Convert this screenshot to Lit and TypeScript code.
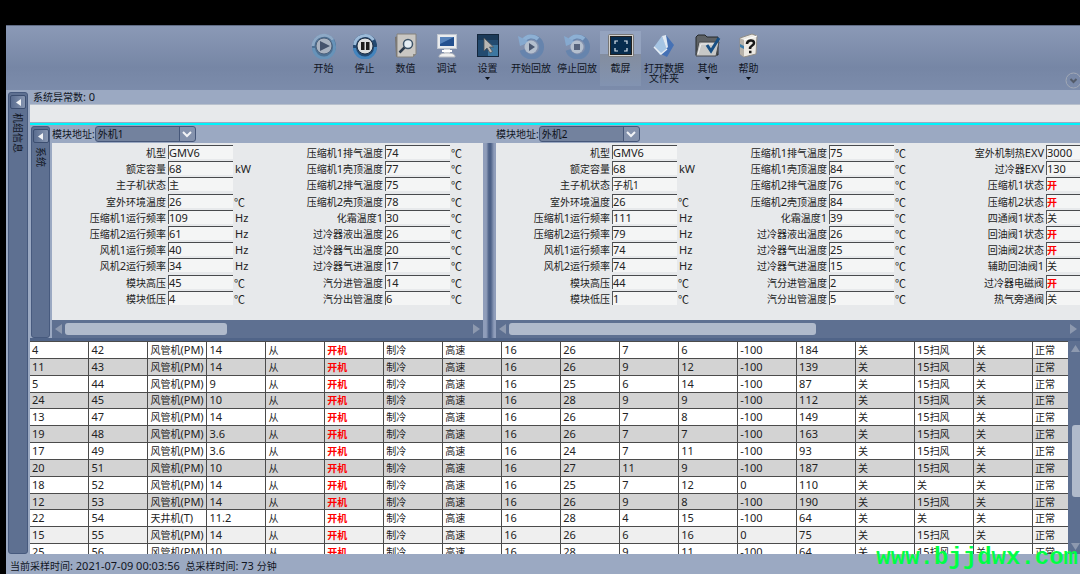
import { LitElement, html, css, svg, nothing, type TemplateResult } from "lit";
import { customElement, property } from "lit/decorators.js";
import { classMap } from "lit/directives/class-map.js";

const base = css`
  * { box-sizing: border-box; }
  button { font: inherit; color: inherit; border: 0; padding: 0; background: none; }
  .latin { font-size: 11px; }
`;

/* Latin runs are set one pixel larger than the Chinese around them. */
const mixed = (text: string) =>
  text.split(/([\x20-\x7e]+)/).filter((t) => t).map((t) =>
    /^[\x20-\x7e]+$/.test(t) ? html`<span class="latin">${t}</span>` : t);

const icons: Record<string, TemplateResult> = {
  play: svg`<circle cx="14" cy="13" r="12" fill="#4d7194"/><path d="M3 13a11 11 0 0 1 20-6" fill="none" stroke="#8ea9c6" stroke-width="3"/><path d="M3.500 15a10.500 10.500 0 0 0 21-1c0-3-1-5-2-7" fill="none" stroke="#6793b9" stroke-width="3"/><circle cx="14" cy="13" r="8" fill="#a9b3c1" stroke="#4c617c"/><path d="M10 8l10 5-10 5z" fill="#45536c"/>`,
  pause: svg`<circle cx="14" cy="13" r="12" fill="#234870"/><path d="M3.500 12a10.500 10.500 0 0 1 19-5" fill="none" stroke="#9dbbd9" stroke-width="3"/><path d="M3.500 15a10.500 10.500 0 0 0 21-1" fill="none" stroke="#4384bd" stroke-width="3"/><circle cx="14" cy="13" r="8" fill="#dcdedf" stroke="#1d2d43"/><path d="M10 9h3.500v8H10zM15 9h3.500v8H15z" fill="#1c1c1c"/>`,
  value: svg`<path d="M3 4l3-1v20l-2 1z" fill="#77736e"/><path d="M5 1h19v20l-3 3H5z" fill="#c9c7c3" stroke="#85827d"/><path d="M24 21h-3v3z" fill="#8b8984"/><circle cx="16" cy="11" r="4.500" fill="#e6eef3" stroke="#3e5468" stroke-width="1.500"/><path d="M12.500 14.500l-5 5" stroke="#2d3b4b" stroke-width="2.500"/>`,
  debug: svg`<rect x="4.500" y="1.500" width="19" height="14" fill="#e9ebee" stroke="#c0c6d0"/><rect x="7" y="4" width="14" height="9" fill="#24508f"/><path d="M7 4h14l-14 7z" fill="#5783bb"/><path d="M11 16h6v4h-6z" fill="#d9dce0"/><path d="M6 24c0-3 3-4 8-4s8 1 8 4z" fill="#f0f0ef" stroke="#b7bac0"/><path d="M9 18h10" stroke="#fff" stroke-width="2"/>`,
  cursor: svg`<rect x="3.500" y="1.500" width="21" height="22" fill="#234b70" stroke="#14263c"/><path d="M14 12h10v11H14z" fill="#3d77a0"/><path d="M4 2h20v5H4z" fill="#1c3a59"/><path d="M10 5v13l3-3 3 5 2.500-1.500-3-4.500h4z" fill="#b8b7b4" stroke="#4f5358" stroke-width=".8"/>`,
  replay: svg`<path d="M5 11a10 10 0 1 1 0 6" fill="none" stroke="#6684ad" stroke-width="5"/><path d="M6 8a10 10 0 0 1 15-2" fill="none" stroke="#8db0d4" stroke-width="4"/><path d="M1 3l2 10 10-4z" fill="#86a9cf"/><circle cx="14" cy="14" r="6.500" fill="#b4bfce"/><path d="M12 10l6 4-6 4z" fill="#4a5770"/>`,
  stopReplay: svg`<path d="M5 11a10 10 0 1 1 0 6" fill="none" stroke="#6684ad" stroke-width="5"/><path d="M6 8a10 10 0 0 1 15-2" fill="none" stroke="#8db0d4" stroke-width="4"/><path d="M1 3l2 10 10-4z" fill="#86a9cf"/><circle cx="14" cy="14" r="6.500" fill="#b4bfce"/><rect x="11" y="11" width="6" height="6" fill="#56637c"/>`,
  screen: svg`<rect x="1.500" y="1.500" width="25" height="22" rx="1" fill="#d3d2cf" stroke="#777"/><rect x="3.500" y="3.500" width="21" height="18" fill="#072c4e" stroke="#222"/><path d="M8 11V8h3M17 8h3v3M20 15v3h-3M11 18H8v-3" fill="none" stroke="#dbe4ed" stroke-width="1.200"/>`,
  folder: svg`<path d="M4 14L12 3l5 13-7 6z" fill="#a5c4e3"/><path d="M12 3l4-1 5 13-4 2z" fill="#dfe8f2"/><path d="M16 2l8 10-7 12-6-3 7-7z" fill="#4571b5"/><path d="M4 14l7 7 6-5" fill="none" stroke="#e8eef5" stroke-width="1.500"/>`,
  other: svg`<path d="M2 4l2-2h7l2 2h11v18H2z" fill="#5e6265" stroke="#25282b"/><path d="M5 9h20l-3 14H2z" fill="#c7c8c7" stroke="#484b4e"/><path d="M4 21l3-10h16" fill="none" stroke="#eee"/><path d="M13 12l4 6L25 5" fill="none" stroke="#174f84" stroke-width="3"/>`,
  help: svg`<path d="M5 5l12-4 5 2-1 18-12 3-4-3z" fill="#ece9e3" stroke="#918d86"/><path d="M5 5l4 2v17l-4-3z" fill="#b7b2aa"/><path d="M9 7l13-4" stroke="#fff"/><path d="M5 11l4 2v3l-4-2z" fill="#3c7ba8"/><path d="M12 11c0-4 7-5 7-1 0 3-4 2-4 6M14 19h2.500" fill="none" stroke="#171717" stroke-width="2.500"/>`,
};

interface Tool { icon: string; label: string; size?: string; menu?: boolean; active?: boolean }
const tools: Tool[] = [
  { icon: "play", label: "开始" }, { icon: "pause", label: "停止" },
  { icon: "value", label: "数值" }, { icon: "debug", label: "调试" },
  { icon: "cursor", label: "设置", menu: true },
  { icon: "replay", label: "开始回放", size: "wide" },
  { icon: "stopReplay", label: "停止回放", size: "wide" },
  { icon: "screen", label: "截屏", active: true },
  { icon: "folder", label: "打开数据文件夹", size: "wide" },
  { icon: "other", label: "其他", menu: true }, { icon: "help", label: "帮助", menu: true },
];

@customElement("tool-bar")
export class ToolBar extends LitElement {
  static styles = [base, css`
    :host { display: flex; justify-content: center; padding: 5px 14px 4px 0; height: 65px; position: relative;
      background: linear-gradient(#8b99b6, #7686a5 65%, #7c8cab); border-top: 1px solid #5f6b84; }
    .tool { width: 41px; display: flex; flex-direction: column; align-items: center; padding-top: 2px; line-height: 10px; }
    .tool.wide { width: 46px; padding-left: 2px; padding-right: 2px; }
    .tool.active { background: linear-gradient(#94a3bf 42%, #838d9f 42%, #8293b1); }
    .icon { width: 28px; height: 26px; margin-bottom: 4px; flex: none; }
    .caret { width: 5px; height: 3px; margin-top: 4px; background: #0b0f16; clip-path: polygon(0 0, 100% 0, 50% 100%); }
    .fold { position: absolute; right: -2px; bottom: 1px; width: 17px; height: 17px; }
  `];
  render() {
    return html`${tools.map((t) => html`
      <button class=${classMap({ tool: true, wide: t.size === "wide", active: !!t.active })}>
        <svg class="icon" viewBox="0 0 28 26">${icons[t.icon]}</svg>
        <span>${t.label}</span>${t.menu ? html`<span class="caret"></span>` : nothing}
      </button>`)}
      <button class="fold" aria-label="收起">
        <svg width="17" height="17" viewBox="0 0 17 17" fill="none"><circle cx="8.500" cy="8.500" r="7.500" stroke="#a2a9b6"/><path d="M5.500 7l3 3 3-3" stroke="#535b69" stroke-width="2"/></svg>
      </button>`;
  }
}

@customElement("side-tab")
export class SideTab extends LitElement {
  @property() label = "";
  static styles = [base, css`
    :host { display: flex; flex-direction: column; align-items: center; gap: 4px; padding-top: 2px;
      background: #5e7091; border: 1px solid #475a7e; border-radius: 3px; }
    .collapse { width: 16px; height: 14px; border: 1px solid #3c4e70; border-radius: 2px;
      background: linear-gradient(90deg, #5a6d90, #8796b1); display: grid; place-items: center; }
    .text { writing-mode: vertical-rl; text-orientation: sideways; line-height: 14px; color: #10151f; }
  `];
  render() {
    return html`<button class="collapse" aria-label="折叠${this.label}">
        <svg width="5" height="7" viewBox="0 0 5 7"><path d="M5 0v7L0 3.500z" fill="#f2f4f7"/></svg>
      </button><span class="text">${this.label}</span>`;
  }
}

type Field = [label: string, value: string, unit: string];
const names = [
  ["机型", "额定容量", "主子机状态", "室外环境温度", "压缩机1运行频率", "压缩机2运行频率", "风机1运行频率", "风机2运行频率", "模块高压", "模块低压"],
  ["压缩机1排气温度", "压缩机1壳顶温度", "压缩机2排气温度", "压缩机2壳顶温度", "化霜温度1", "过冷器液出温度", "过冷器气出温度", "过冷器气进温度", "汽分进管温度", "汽分出管温度"],
  ["室外机制热EXV", "过冷器EXV", "压缩机1状态", "压缩机2状态", "四通阀1状态", "回油阀1状态", "回油阀2状态", "辅助回油阀1", "过冷器电磁阀", "热气旁通阀"],
];
const units = [["", "kW", "", "℃", "Hz", "Hz", "Hz", "Hz", "℃", "℃"], Array(10).fill("℃"), Array(10).fill("")];
const group = (values: string[]): Field[][] =>
  values.map((line, c) => line.split(" ").map((v, r): Field => [names[c][r], v, units[c][r]]));

const units1 = group(["GMV6 68 主 26 109 61 40 34 45 4", "74 77 75 78 30 26 20 17 14 6"]);
const units2 = group(["GMV6 68 子机1 26 111 79 74 74 44 1", "75 84 76 84 39 26 25 15 2 5", "3000 130 开 开 关 开 开 关 开 关"]);

@customElement("unit-panel")
export class UnitPanel extends LitElement {
  @property() name = "";
  @property({ type: Number }) thumb = 50;
  @property({ attribute: false }) groups: Field[][] = [];
  static styles = [base, css`
    :host { display: flex; flex-direction: column; min-width: 0; overflow: hidden; }
    .address { height: 18px; flex: none; display: flex; align-items: center; background: #9ba9c2; }
    .picker { position: relative; display: flex; }
    .select { appearance: none; width: 101px; height: 16px; padding: 0 20px 0 2px; border: 1px solid #465779; border-radius: 3px;
      background: linear-gradient(90deg, #73829e 83px, #465779 83px, #465779 84px, #8492ad 84px); font: inherit; color: #0d1119; }
    .chevron { position: absolute; right: 4px; top: 5px; pointer-events: none; }
    .fields { flex: 1; display: flex; background: #e7e9eb; padding: 2px 0 13px; }
    .group { flex: none; width: 217px; display: grid; grid-template-columns: 115px 65px 1fr; column-gap: 1px; grid-template-rows: repeat(10, 1fr); line-height: 16px; color: #222; }
    .row { display: contents; }
    .name { text-align: right; white-space: nowrap; padding-right: 1px; }
    .value { width: 65px; height: 14px; padding: 0; border: 0; border-top: 1px solid #484a4d; border-left: 1px solid #55585c; border-radius: 0;
      background: #f4f5f5; color: #222; font: inherit; font-size: 11px; line-height: 13px; outline: 0; }
    .value.cjk { font-size: 10px; }
    .value.on { color: #f00; font-weight: 700; }
    .unit { padding-left: 1px; font-size: 11px; }
    .unit.degree { padding-left: 0; font-family: "Noto Sans CJK SC", sans-serif; }
    .scroll { height: 18px; flex: none; background: #5e7091; display: flex; align-items: center; padding: 0 3px; gap: 3px; }
    .track { flex: 1; height: 12px; }
    .thumb { height: 12px; border-radius: 3px; background: #b0bacb; }
    .arrow { display: flex; }
  `];
  render() {
    return html`
      <div class="address"><label for="unit">模块地址:</label>
        <div class="picker"><select class="select" id="unit"><option>${this.name}</option></select>
          <svg class="chevron" width="10" height="7" viewBox="0 0 10 7"><path d="M1 1l4 4 4-4" fill="none" stroke="#f1f3f6" stroke-width="2"/></svg></div>
      </div>
      <div class="fields">${this.groups.map((g, c) => html`<div class="group">${g.map(([label, value, unit], r) => html`
        <div class="row">
          <label class="name" for="f${c}-${r}">${mixed(label)}</label>
          <input id="f${c}-${r}" class=${classMap({ value: true, cjk: /[^\x00-\x7f]/.test(value), on: value === "开" })} .value=${value} readonly>
          <span class=${classMap({ unit: true, degree: unit === "℃" })}>${unit}</span>
        </div>`)}</div>`)}</div>
      <div class="scroll">
        <button class="arrow" aria-label="向左"><svg width="7" height="10"><path d="M7 0v10L0 5z" fill="#8d99af"/></svg></button>
        <div class="track"><div class="thumb" style="width:${this.thumb}%"></div></div>
        <button class="arrow" aria-label="向右"><svg width="7" height="10"><path d="M0 0v10l7-5z" fill="#8d99af"/></svg></button>
      </div>`;
  }
}

/* no., address, model, capacity, then the columns that differ from row to row */
const indoor = [
  "4 42 风管机(PM) 14 26 7 6 -100 184 15扫风", "11 43 风管机(PM) 14 26 9 12 -100 139 15扫风",
  "5 44 风管机(PM) 9 25 6 14 -100 87 15扫风", "24 45 风管机(PM) 10 28 9 9 -100 112 15扫风",
  "13 47 风管机(PM) 14 26 7 8 -100 149 15扫风", "19 48 风管机(PM) 3.6 26 7 7 -100 163 15扫风",
  "17 49 风管机(PM) 3.6 24 7 11 -100 93 15扫风", "20 51 风管机(PM) 10 27 11 9 -100 187 15扫风",
  "18 52 风管机(PM) 14 25 7 12 0 110 关", "12 53 风管机(PM) 14 26 9 8 -100 190 15扫风",
  "22 54 天井机(T) 11.2 28 4 15 -100 64 关", "15 55 风管机(PM) 14 26 6 16 0 75 15扫风",
  "25 56 风管机(PM) 10 28 9 11 -100 64 15扫风",
].map((line) => {
  const [no, addr, model, cap, t1, t2, t3, t4, t5, swing] = line.split(" ");
  return [no, addr, model, cap, "从", "开机", "制冷", "高速", "16", t1, t2, t3, t4, t5, "关", swing, "关", "正常"];
});

@customElement("indoor-table")
export class IndoorTable extends LitElement {
  static styles = [base, css`
    :host { display: flex; min-height: 0; flex: 1; overflow: hidden; background: #5e7091; }
    .view { flex: 1; min-width: 0; overflow: hidden; }
    .table { width: 1062px; height: 220px; table-layout: fixed; border-collapse: collapse; background: #fff; color: #222; }
    .cell { border: 1px solid #4b4b4b; padding: 0 0 0 2px; line-height: 14px; white-space: nowrap; }
    .cell:first-child { border-left: 0; }
    .row:nth-child(even) { background: #d3d3d3; }
    .row:nth-child(12) { background: #efefef; }
    .on { color: #f00; font-weight: 700; }
    .scroll { width: 12px; flex: none; display: flex; flex-direction: column; align-items: flex-end; padding: 4px 0; gap: 3px; }
    .arrow { display: flex; }
    .track { flex: 1; width: 8px; display: flex; flex-direction: column; }
    .lead { height: 38%; }
    .thumb { height: 39%; border-radius: 3px 0 0 3px; background: #b0bacb; }
  `];
  render() {
    return html`<div class="view"><table class="table"><tbody>${indoor.map((row) => html`<tr class="row">${row.map((c) =>
        html`<td class=${classMap({ cell: true, on: c === "开机" })}>${mixed(c)}</td>`)}</tr>`)}</tbody></table></div>
      <div class="scroll">
        <button class="arrow" aria-label="向上"><svg width="9" height="7"><path d="M0 7h9L4.500 0z" fill="#8d99af"/></svg></button>
        <div class="track"><div class="lead"></div><div class="thumb"></div></div>
        <button class="arrow" aria-label="向下"><svg width="9" height="7"><path d="M0 0h9L4.500 7z" fill="#8d99af"/></svg></button>
      </div>`;
  }
}

@customElement("app-root")
export class AppRoot extends LitElement {
  static styles = [base, css`
    :host { display: flex; flex-direction: column; box-sizing: border-box; height: 100vh; overflow: hidden; position: relative; padding: 25px 0 0 6px; background: #000;
      font: 10px/14px "Noto Sans", "Noto Sans CJK SC", sans-serif; color: #10151f; }
    .tools { flex: none; }
    .main { flex: 1; min-height: 0; display: flex; gap: 2px; padding-left: 2px; background: #9ba9c2; }
    .side { width: 20px; flex: none; margin-top: 2px; }
    .content { flex: 1; min-width: 0; display: flex; flex-direction: column; }
    .count { padding-left: 3px; height: 14px; flex: none; }
    .alert { height: 18px; flex: none; background: #e7e9eb; border-top: 1px solid #b9c1cd; }
    .system { display: grid; grid-template-columns: 20px minmax(0, 433fr) 13px minmax(0, 584fr); flex: none; margin-top: 1px; height: 218px;
      border-top: 2px solid #00f4fb; border-bottom: 3px solid #506488; }
    .inner { margin: 1px 0 0 1px; }
    .panel.first { margin-left: 2px; }
    .splitter { margin-top: 18px; background: linear-gradient(90deg, #8f9dba, #8f9dba 25%, #4d6187 45%, #4d6187 60%, #8f9dba 85%); }
    .status { height: 20px; flex: none; padding: 5px 0 0 4px; line-height: 14px; background: #9ba9c2; white-space: pre; }
    .site { position: absolute; right: 2px; bottom: 4px; font: bold 24px/24px "Liberation Mono", monospace; color: #00ff45; text-decoration: none; }
  `];
  render() {
    return html`
      <tool-bar class="tools"></tool-bar>
      <div class="main">
        <side-tab class="side" label="机组信息"></side-tab>
        <div class="content">
          <div class="count">${mixed("系统异常数: 0")}</div>
          <div class="alert"></div>
          <div class="system">
            <side-tab class="inner" label="系统"></side-tab>
            <unit-panel class="panel first" name="外机1" thumb="40" .groups=${units1}></unit-panel>
            <div class="splitter"></div>
            <unit-panel class="panel" name="外机2" thumb="55" .groups=${units2}></unit-panel>
          </div>
          <indoor-table></indoor-table>
        </div>
      </div>
      <div class="status">${mixed("当前采样时间: 2021-07-09 00:03:56  总采样时间: 73 分钟")}</div>
      <a class="site" href="#">www.bjjdwx.com</a>`;
  }
}
